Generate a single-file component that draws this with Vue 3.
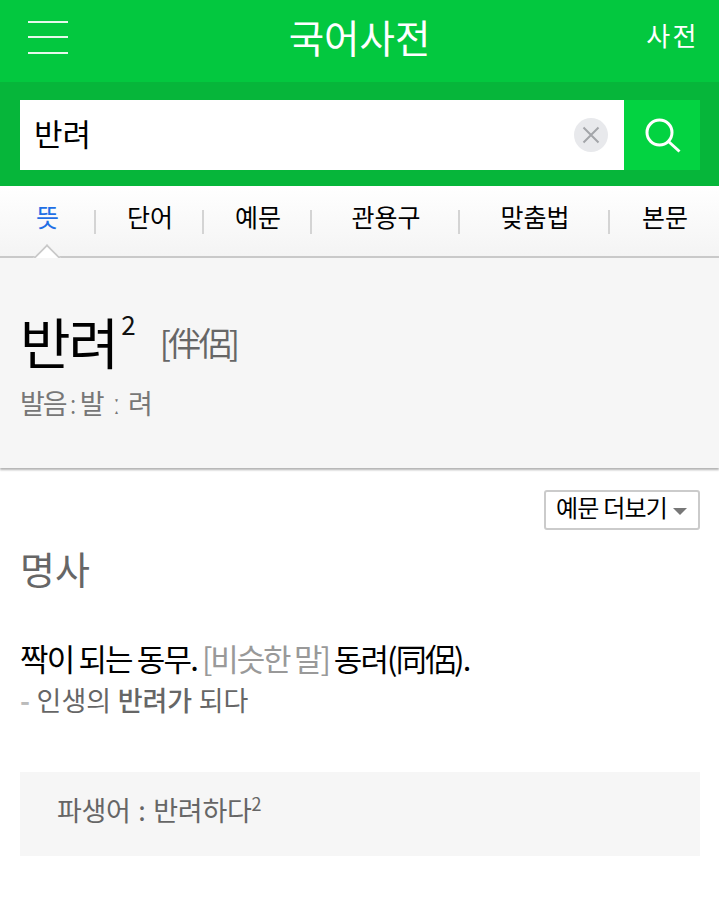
<script setup>
const tabs = ["뜻", "단어", "예문", "관용구", "맞춤법", "본문"];
</script>

<template>
  <div class="page">
    <header class="top-bar">
      <button type="button" class="menu-button" aria-label="메뉴">
        <span></span><span></span><span></span>
      </button>
      <h1>국어사전</h1>
      <span class="dict-link">사전</span>
    </header>

    <div class="search-bar">
      <div class="search-input">
        <span class="query">반려</span>
        <span class="clear-button">
          <svg width="34" height="34" viewBox="0 0 34 34">
            <circle cx="17" cy="17" r="17" fill="#e8e9ec" />
            <path d="M9.5 9.5l15 15M24.5 9.5l-15 15" stroke="#a3a5a9" stroke-width="2" fill="none" />
          </svg>
        </span>
      </div>
      <button type="button" class="search-button" aria-label="검색">
        <svg width="38" height="38" viewBox="0 0 38 38">
          <circle cx="16.5" cy="16.5" r="12.5" stroke="#fff" stroke-width="3" fill="none" />
          <path d="M25.5 25.5l11 10" stroke="#fff" stroke-width="3" fill="none" />
        </svg>
      </button>
    </div>

    <nav class="tabs">
      <a v-for="(tab, index) in tabs" :key="tab" class="tab" :class="{ active: index === 0 }">{{ tab }}</a>
    </nav>

    <section class="entry-head">
      <div class="entry-title">
        <strong>반려</strong><sup>2</sup>
        <span class="hanja">[伴侶]</span>
      </div>
      <p class="pronounce"><span class="label">발음</span><span class="colon">:</span>발<span class="long">ː</span>려</p>
    </section>

    <div class="more-row">
      <button type="button" class="more-button">예문 더보기<i class="caret"></i></button>
    </div>

    <section class="meaning">
      <h2>명사</h2>
      <p class="definition">짝이 되는 동무. <span class="similar">[비슷한 말]</span> 동려(同侶).</p>
      <p class="example"><span class="dash">-</span> 인생의 <b>반려가</b> 되다</p>
    </section>

    <div class="derived">파생어 : 반려하다<sup>2</sup></div>
  </div>
</template>

<style scoped>
.page {
  width: 719px;
  height: 911px;
  overflow: hidden;
  background: #fff;
  font-family: "Noto Sans CJK KR", "Liberation Sans", sans-serif;
}

.top-bar {
  height: 82px;
  background: #03c83f;
  display: flex;
  align-items: center;
  justify-content: space-between;
  padding: 0 20px 8px 28px;
  box-sizing: border-box;
  position: relative;
  color: #fff;
}

.menu-button {
  width: 40px;
  height: 33px;
  padding: 0;
  border: none;
  background: none;
  display: flex;
  flex-direction: column;
  justify-content: space-between;
}

.menu-button span {
  display: block;
  height: 2px;
  background: #e6f9ec;
}

.top-bar h1 {
  margin: 0;
  position: absolute;
  left: 0;
  right: 0;
  top: 9px;
  text-align: center;
  font-size: 38.5px;
  line-height: 54px;
  font-weight: 400;
}

.dict-link {
  font-size: 26px;
  letter-spacing: 2.5px;
  line-height: 36px;
  position: relative;
  top: -2px;
}

.search-bar {
  height: 104px;
  background: #06b63a;
  padding: 18px 19px 16px 20px;
  box-sizing: border-box;
  display: flex;
}

.search-input {
  flex: 1;
  background: #fff;
  display: flex;
  align-items: center;
  justify-content: space-between;
  padding: 0 16px 0 14px;
}

.query {
  font-size: 31px;
  line-height: 70px;
  color: #000;
  position: relative;
  top: -2px;
}

.clear-button {
  display: flex;
}

.search-button {
  width: 76px;
  padding: 0;
  border: none;
  background: #03d341;
  display: flex;
  align-items: center;
  justify-content: center;
}

.tabs {
  height: 72px;
  box-sizing: border-box;
  display: grid;
  grid-template-columns: 95px 108px 108px 148px 150px 110px;
  background: linear-gradient(180deg, #fff 0%, #f4f4f4 100%);
  border-bottom: 2px solid #c9c9c9;
  position: relative;
  z-index: 1;
}

.tab {
  position: relative;
  height: 66px;
  padding-bottom: 6px;
  box-sizing: border-box;
  display: flex;
  align-items: center;
  justify-content: center;
  font-size: 25px;
  color: #000;
}

.tab + .tab {
  padding-left: 2px;
}

.tab + .tab::before {
  content: "";
  position: absolute;
  left: -1px;
  top: 24px;
  width: 2px;
  height: 24px;
  background: #d4d4d4;
}

.tab.active {
  color: #1f6fe5;
}

.tab.active::after {
  content: "";
  position: absolute;
  left: 37px;
  top: 62px;
  width: 20px;
  height: 20px;
  background: #fff;
  border: solid #c9c9c9;
  border-width: 2px 0 0 2px;
  transform: rotate(45deg);
  box-sizing: border-box;
  clip-path: polygon(0 0, 100% 0, 0 100%);
}

.entry-head {
  height: 210px;
  box-sizing: border-box;
  background: #f6f6f6;
  padding: 44px 20px 0;
  box-shadow: 0 2px 2px rgba(0, 0, 0, 0.3);
  position: relative;
}

.entry-title {
  display: flex;
  align-items: flex-start;
  height: 80px;
}

.entry-title strong {
  font-size: 55px;
  line-height: 76px;
  font-weight: 400;
  letter-spacing: -2px;
  color: #000;
}

.entry-title sup {
  font-size: 26px;
  line-height: 44px;
  margin-left: 4px;
  color: #111;
}

.hanja {
  margin-left: 24px;
  font-size: 33px;
  line-height: 80px;
  letter-spacing: -2.7px;
  color: #666;
}

.pronounce {
  margin: 2px 0 0;
  font-size: 27px;
  line-height: 38px;
  letter-spacing: -0.6px;
  color: #777;
}

.label {
  letter-spacing: -2px;
}

.colon {
  margin: 0 4px;
  font-weight: 300;
}

.long {
  display: inline-block;
  width: 24px;
  text-align: center;
}

.more-row {
  display: flex;
  justify-content: flex-end;
  padding: 22px 19px 0 0;
}

.more-button {
  width: 156px;
  height: 40px;
  box-sizing: border-box;
  padding: 0 1px 7px 0;
  border: 2px solid #cbcbcb;
  border-radius: 3px;
  background: #fff;
  font-family: inherit;
  font-size: 24px;
  letter-spacing: -0.8px;
  color: #000;
  display: flex;
  align-items: center;
  justify-content: center;
}

.caret {
  width: 0;
  height: 0;
  margin: 9px 0 0 6px;
  border: 7px solid transparent;
  border-top: 7px solid #777;
  border-bottom: 0;
}

.meaning {
  padding: 12px 20px 0;
}

.meaning h2 {
  margin: 0;
  font-size: 38px;
  line-height: 52px;
  font-weight: 400;
  color: #666;
}

.definition {
  margin: 41px 0 0;
  font-size: 31px;
  line-height: 46px;
  letter-spacing: -1.85px;
  color: #000;
}

.similar {
  letter-spacing: -2.2px;
  color: #999;
}

.example {
  margin: 0;
  font-size: 27px;
  line-height: 38px;
  letter-spacing: 0;
  color: #666;
  word-spacing: 0.5px;
}

.example b {
  font-weight: 500;
}

.dash {
  font-weight: 700;
  color: #bbb;
}

.derived {
  margin: 53px 19px 0 20px;
  height: 84px;
  box-sizing: border-box;
  padding-left: 37px;
  background: #f6f6f6;
  font-size: 27px;
  line-height: 76px;
  letter-spacing: -0.3px;
  word-spacing: 2px;
  color: #666;
}

.derived sup {
  font-size: 18px;
  line-height: 0;
}
</style>
